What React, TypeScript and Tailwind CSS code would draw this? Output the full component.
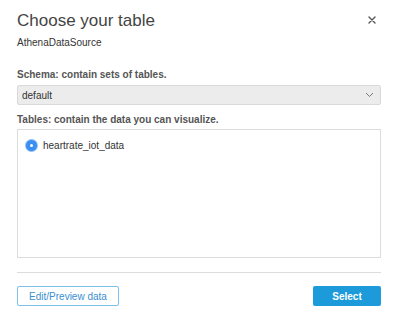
export default function App() {
  return (
    <div
      className="w-[400px] h-[316px] bg-white pl-[17px] pr-[19px] pt-[8px] text-[#444]"
      style={{ fontFamily: '"Liberation Sans", Arial, sans-serif' }}
    >
      {/* Header */}
      <div className="flex items-start justify-between">
        <h1 className="text-[17px] leading-[20px] text-[#444] mt-[3px]">Choose your table</h1>
        <button className="mt-[8px] mr-[5px] text-[#555]">
          <svg width="8" height="8" viewBox="0 0 8 8">
            <path d="M1 1L7 7M7 1L1 7" stroke="#555" strokeWidth="1.4" strokeLinecap="round" />
          </svg>
        </button>
      </div>
      <div className="text-[10px] leading-[12px] mt-[6px] text-[#333]">AthenaDataSource</div>

      {/* Schema */}
      <div className="text-[10px] leading-[12px] font-bold mt-[20px] text-[#555]">
        Schema: contain sets of tables.
      </div>
      <div className="mt-[4px] h-[20px] flex items-center justify-between bg-[#ececec] border border-[#d9d9d9] rounded-[2px] pl-[4px] pr-[6px]">
        <span className="text-[10px] text-[#333]">default</span>
        <svg width="9" height="6" viewBox="0 0 9 6">
          <path d="M1 1L4.5 4.5L8 1" fill="none" stroke="#777" strokeWidth="1" />
        </svg>
      </div>

      {/* Tables */}
      <div className="text-[10px] leading-[12px] font-bold mt-[9px] text-[#555]">
        Tables: contain the data you can visualize.
      </div>
      <div className="mt-[3px] h-[129px] border border-[#dcdcdc] bg-white pt-[8px] pl-[8px]">
        <label className="flex items-center gap-[6px]">
          <span className="w-[11px] h-[11px] rounded-full bg-[#3b8ff0] flex items-center justify-center shadow-[0_0_0_1px_#8dbdf6]">
            <span className="w-[3px] h-[3px] rounded-full bg-white" />
          </span>
          <span className="text-[10px] text-[#333]">heartrate_iot_data</span>
        </label>
      </div>

      {/* Divider */}
      <div className="mt-[14px] h-px bg-[#dcdcdc]" />

      {/* Footer */}
      <div className="mt-[13px] flex justify-between">
        <button className="w-[102px] h-[20px] border border-[#7ec0ec] rounded-[2px] text-[10px] text-[#3a8fd0] bg-white">
          Edit/Preview data
        </button>
        <button className="w-[68px] h-[20px] rounded-[2px] text-[10px] font-bold text-white bg-[#1d9ad9]">
          Select
        </button>
      </div>
    </div>
  );
}
